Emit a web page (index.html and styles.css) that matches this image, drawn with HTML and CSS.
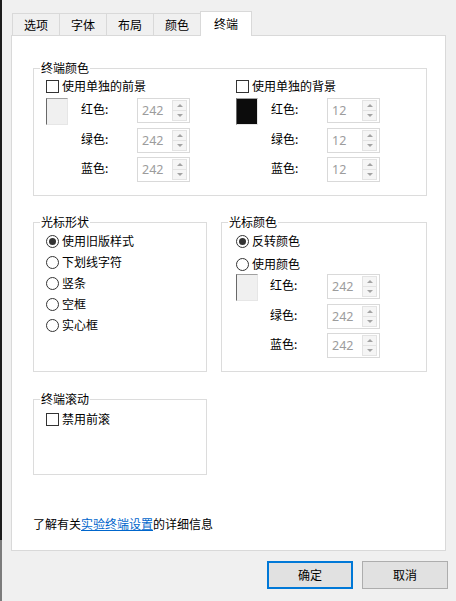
FILE: index.html
```html
<!DOCTYPE html>
<html lang="zh-CN">
<head>
<meta charset="utf-8">
<title>终端</title>
<link rel="stylesheet" href="styles.css">
</head>
<body>
<div class="window">
  <div class="tabs">
    <div class="tab">选项</div>
    <div class="tab">字体</div>
    <div class="tab">布局</div>
    <div class="tab">颜色</div>
    <div class="tab active">终端</div>
  </div>
  <div class="panel">
    <fieldset class="group g-colors">
      <legend>终端颜色</legend>
      <div class="cols">
        <div class="col">
          <div class="check"><span class="cb"></span><span>使用单独的前景</span></div>
          <div class="colorgrid">
            <span class="swatch light"></span>
            <span class="lbl">红色:</span>
            <span class="spin"><span class="val">242</span><span class="arrows"><i class="up"></i><i class="down"></i></span></span>
            <span class="lbl">绿色:</span>
            <span class="spin"><span class="val">242</span><span class="arrows"><i class="up"></i><i class="down"></i></span></span>
            <span class="lbl">蓝色:</span>
            <span class="spin"><span class="val">242</span><span class="arrows"><i class="up"></i><i class="down"></i></span></span>
          </div>
        </div>
        <div class="col">
          <div class="check"><span class="cb"></span><span>使用单独的背景</span></div>
          <div class="colorgrid">
            <span class="swatch dark"></span>
            <span class="lbl">红色:</span>
            <span class="spin"><span class="val">12</span><span class="arrows"><i class="up"></i><i class="down"></i></span></span>
            <span class="lbl">绿色:</span>
            <span class="spin"><span class="val">12</span><span class="arrows"><i class="up"></i><i class="down"></i></span></span>
            <span class="lbl">蓝色:</span>
            <span class="spin"><span class="val">12</span><span class="arrows"><i class="up"></i><i class="down"></i></span></span>
          </div>
        </div>
      </div>
    </fieldset>

    <div class="row2">
      <fieldset class="group g-shape">
        <legend>光标形状</legend>
        <div class="radios">
          <div class="radio"><span class="rb checked"></span><span>使用旧版样式</span></div>
          <div class="radio"><span class="rb"></span><span>下划线字符</span></div>
          <div class="radio"><span class="rb"></span><span>竖条</span></div>
          <div class="radio"><span class="rb"></span><span>空框</span></div>
          <div class="radio"><span class="rb"></span><span>实心框</span></div>
        </div>
      </fieldset>
      <fieldset class="group g-cursor">
        <legend>光标颜色</legend>
        <div class="cursor-body">
          <div class="radios tight">
            <div class="radio"><span class="rb checked"></span><span>反转颜色</span></div>
            <div class="radio"><span class="rb"></span><span>使用颜色</span></div>
          </div>
          <div class="colorgrid">
            <span class="swatch light"></span>
            <span class="lbl">红色:</span>
            <span class="spin"><span class="val">242</span><span class="arrows"><i class="up"></i><i class="down"></i></span></span>
            <span class="lbl">绿色:</span>
            <span class="spin"><span class="val">242</span><span class="arrows"><i class="up"></i><i class="down"></i></span></span>
            <span class="lbl">蓝色:</span>
            <span class="spin"><span class="val">242</span><span class="arrows"><i class="up"></i><i class="down"></i></span></span>
          </div>
        </div>
      </fieldset>
    </div>

    <fieldset class="group g-scroll">
      <legend>终端滚动</legend>
      <div class="scroll-body">
        <div class="check"><span class="cb"></span><span>禁用前滚</span></div>
      </div>
    </fieldset>

    <p class="info">了解有关<a class="link" href="#">实验终端设置</a>的详细信息</p>
  </div>
  <div class="footer">
    <button class="btn default">确定</button>
    <button class="btn">取消</button>
  </div>
</div>
</body>
</html>
```

FILE: styles.css
```css
html, body {
  margin: 0;
  padding: 0;
}

body {
  width: 456px;
  height: 601px;
  overflow: hidden;
  background:
    linear-gradient(#1c1c1c, #1c1c1c) 0 0 / 2px 540px no-repeat,
    linear-gradient(#7c7c7c, #7c7c7c) 0 540px / 2px 61px no-repeat,
    #f0f0f0;
  font-family: "Noto Sans CJK SC", "Noto Sans", sans-serif;
  font-size: 12px;
  line-height: 14px;
  color: #000;
}

.window {
  display: flex;
  flex-direction: column;
}

/* Tabs */
.tabs {
  display: flex;
  align-items: flex-end;
  height: 35px;
  padding-left: 12px;
  box-sizing: border-box;
}

.tab {
  height: 22px;
  box-sizing: border-box;
  padding: 0 11px;
  margin-right: -1px;
  border: 1px solid #d9d9d9;
  border-bottom: none;
  background: #f0f0f0;
  display: flex;
  align-items: center;
  justify-content: center;
  line-height: 14px;
  padding-top: 1px;
}

.tab.active {
  height: 25px;
  margin-bottom: -1px;
  padding: 0 13px;
  background: #fff;
  position: relative;
  z-index: 1;
}

/* Panel */
.panel {
  margin-left: 11px;
  width: 435px;
  height: 516px;
  box-sizing: border-box;
  border: 1px solid #d9d9d9;
  background: #fff;
  padding: 25px 18px 0 21px;
}

.group {
  margin: 0;
  padding: 0;
  border: 1px solid #dcdcdc;
  min-width: 0;
  box-sizing: border-box;
}

.group legend {
  margin-left: 6px;
  padding: 0 1px;
  line-height: 14px;
}

/* Terminal colors */
.g-colors {
  height: 135px;
}

.cols {
  display: grid;
  grid-template-columns: 190px 1fr;
  padding: 4px 0 0 12px;
}

.check {
  display: flex;
  align-items: center;
  gap: 3px;
  height: 14px;
}

.cb {
  width: 13px;
  height: 13px;
  box-sizing: border-box;
  border: 1px solid #333;
  background: #fff;
  flex: none;
}

.colorgrid {
  display: grid;
  grid-template-columns: 35px 56px 53px;
  grid-auto-rows: 25px;
  row-gap: 4.5px;
  align-items: center;
  margin-top: 5px;
}

.swatch {
  grid-column: 1;
  grid-row: 1;
  align-self: start;
  width: 22px;
  height: 27px;
  box-sizing: border-box;
  border: 1px solid;
  border-color: #a0a0a0 #e6e6e6 #e6e6e6 #696969;
}

.swatch.light {
  background: #f0f0f0;
}

.swatch.dark {
  background: #0c0c0c;
}

.lbl {
  grid-column: 2;
  margin-top: -3px;
}

.spin {
  grid-column: 3;
  display: flex;
  height: 25px;
  box-sizing: border-box;
  border: 1px solid #d9d9d9;
  padding: 1px 2px 1px 1px;
}

.val {
  flex: 1;
  padding-left: 3px;
  font-family: "Noto Sans", "Open Sans", sans-serif;
  font-size: 12.5px;
  line-height: 21px;
  color: #9c9c9c;
}

.arrows {
  width: 15px;
  display: flex;
  flex-direction: column;
}

.arrows i {
  flex: 1;
  display: flex;
  align-items: center;
  justify-content: center;
  border: 1px solid #e3e3e3;
  background: #f5f5f5;
}

.arrows i + i {
  border-top: none;
}

.arrows .up::before {
  content: "";
  border-left: 3px solid transparent;
  border-right: 3px solid transparent;
  border-bottom: 3px solid #a3a3a3;
}

.arrows .down::before {
  content: "";
  border-left: 3px solid transparent;
  border-right: 3px solid transparent;
  border-top: 3px solid #a3a3a3;
}

/* Second row */
.row2 {
  display: grid;
  grid-template-columns: 174px 206px;
  column-gap: 14px;
  margin-top: 19px;
}

.g-shape,
.g-cursor {
  height: 157px;
}

.radios {
  display: flex;
  flex-direction: column;
  gap: 7px;
  padding: 5px 0 0 12px;
}

.radio {
  display: flex;
  align-items: center;
  gap: 3px;
  height: 14px;
}

.rb {
  width: 13px;
  height: 13px;
  box-sizing: border-box;
  border: 1px solid #333;
  border-radius: 50%;
  background: #fff;
  flex: none;
  display: flex;
  align-items: center;
  justify-content: center;
}

.rb.checked::after {
  content: "";
  width: 7px;
  height: 7px;
  border-radius: 50%;
  background: #333;
}

.cursor-body {
  padding-left: 14px;
}

.cursor-body .radios {
  padding-left: 0;
  gap: 9px;
}

.cursor-body .colorgrid {
  grid-template-columns: 34px 57px 53px;
  margin-top: 3px;
}

/* Scroll */
.g-scroll {
  width: 174px;
  height: 83px;
  margin-top: 20px;
}

.scroll-body {
  padding: 6px 0 0 12px;
}

.info {
  margin: 42px 0 0 0;
  line-height: 14px;
}

.link {
  color: #0066cc;
  text-decoration: underline;
}

/* Footer */
.footer {
  display: flex;
  justify-content: flex-end;
  gap: 9px;
  margin-top: 10px;
  padding-right: 8px;
}

.btn {
  width: 86px;
  height: 28px;
  box-sizing: border-box;
  border: 1px solid #adadad;
  background: #e1e1e1;
  font-family: "Noto Sans CJK SC", sans-serif;
  font-size: 12px;
  line-height: 14px;
  color: #000;
  padding: 0;
  margin: 0;
}

.btn.default {
  border: 2px solid #0078d7;
}
```
